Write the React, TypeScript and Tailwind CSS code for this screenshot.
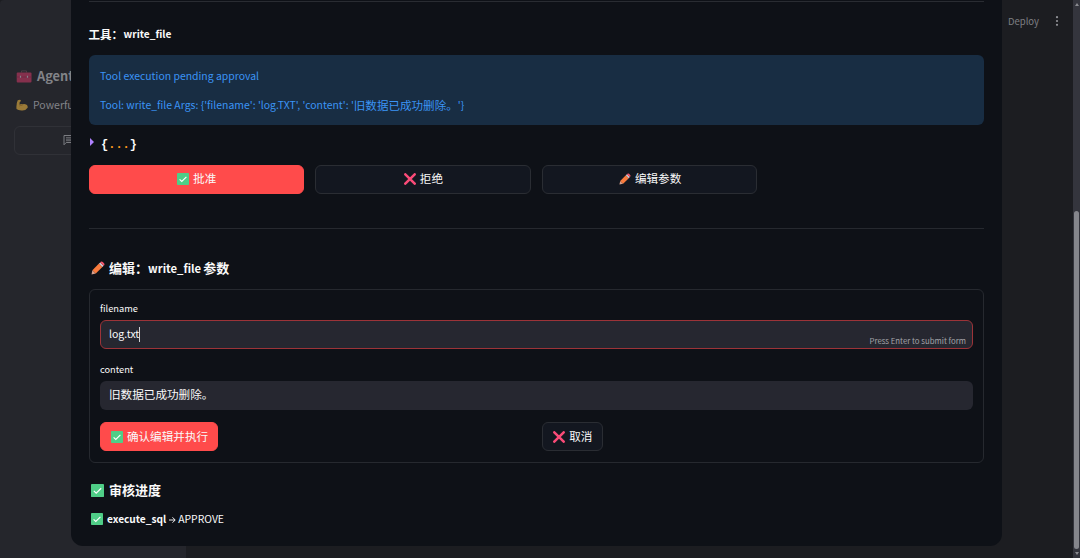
import type { ReactNode } from "react";
import clsx from "clsx";

export default function App() {
  return (
    <div className="relative h-[558px] w-[1080px] overflow-hidden bg-[#1c1d21] font-['Noto_Sans_CJK_SC',sans-serif] text-[#fafafa]">
      <div className="flex h-full">
        <Sidebar />
        <main className="flex flex-1 justify-end">
          <div className="flex h-[42px] items-center gap-[14px] pr-[12px] text-[9.5px] text-[#7e7f83]">
            <span>Deploy</span>
            <MoreIcon />
          </div>
        </main>
        <Scrollbar />
      </div>
      <ApprovalDialog />
    </div>
  );
}

function Sidebar() {
  return (
    <aside className="w-[186px] overflow-hidden rounded-tl-[4px] bg-[#25262c] pl-[14px] text-[#828388]">
      <div className="mt-[66px] flex h-5 items-center gap-[5px] pl-0.5 text-[12.8px] font-bold whitespace-nowrap">
        <ToolboxIcon />
        <span>Agent</span>
      </div>
      <div className="mt-[9px] flex h-5 items-center gap-[5px] pl-0.5 text-[10.5px] whitespace-nowrap">
        <ArmIcon />
        <span>Powerful</span>
      </div>
      <div className="mt-[11px] flex h-[29px] w-[158px] items-center rounded-[6px] border border-[#303137] pl-12">
        <ChatIcon />
      </div>
    </aside>
  );
}

function Scrollbar() {
  return (
    <div className="flex w-[7px] flex-col items-center bg-[#34353d]">
      <div className="mt-[3px] h-0 w-0 border-x-2 border-b-[3px] border-x-transparent border-b-[#8a8b90]" />
      <div className="mt-[205px] h-[338px] w-[5px] rounded-full bg-[#85868c]" />
      <div className="mt-[3px] h-0 w-0 border-x-2 border-t-[3px] border-x-transparent border-t-[#8a8b90]" />
    </div>
  );
}

function ApprovalDialog() {
  return (
    <div
      role="dialog"
      className="absolute top-0 left-[71px] h-[546px] w-[931px] rounded-b-[12px] bg-[#0e1117] pr-[18px] pl-[17.5px]"
    >
      <div className="h-[2px] border-b border-[#292c32]" />

      <h4 className="mt-[22px] flex h-5 items-center text-[11.5px] leading-5 font-bold">
        <span>工具：</span>
        <span className="ml-[0.5px] text-[10.15px]">write_file</span>
      </h4>

      {/* Pending call */}
      <div className="mt-[11px] h-[70px] w-[895.5px] rounded-[6px] bg-[#182d43] px-[11.5px] pt-[11px] text-[10.45px] text-[#3b94f5]">
        <p className="h-5 leading-5">Tool execution pending approval</p>
        <p className="mt-[9px] flex h-5 items-center leading-5 whitespace-pre">
          <span>{"Tool: write_file Args: {'filename': 'log.TXT', 'content': '"}</span>
          <span className="text-[11.55px]">旧数据已成功删除。</span>
          <span>{"'}"}</span>
        </p>
      </div>

      <div className="mt-[11px] flex h-5 w-full gap-2">
        <svg viewBox="0 0 4 8" className="mt-0.5 ml-[1.5px] h-2 w-1">
          <path d="M0 0 4 4 0 8Z" fill="#ae81ff" />
        </svg>
        <span className="-ml-[1px] font-['Liberation_Mono',monospace] text-[12px] leading-[19px] font-bold">
          {"{"}
          <span className="text-[#fd971f]">...</span>
          {"}"}
        </span>
      </div>

      <div className="mt-[8.5px] grid grid-cols-[215.4px_215.4px_215.4px] gap-[11.3px]">
        <Button primary icon={<CheckIcon size={12} />}>批准</Button>
        <Button icon={<CrossIcon />}>拒绝</Button>
        <Button icon={<PencilIcon size={12} />}>编辑参数</Button>
      </div>

      <div className="mt-[34.5px] border-b border-[#26292f]" />

      <h3 className="mt-[29px] flex h-5 items-center pl-0.5 text-[13px] leading-5 font-bold">
        <PencilIcon size={14} />
        <span className="ml-[4.5px]">编辑：</span>
        <span className="text-[11.25px]">write_file</span>
        <span className="ml-[2px]">参数</span>
      </h3>

      {/* Argument form */}
      <form className="mt-[10.5px] h-[174.5px] w-[895.5px] rounded-[6px] border border-[#26292f] px-[10.5px] pt-[10px]">
        <Label>filename</Label>
        <div className="mt-[4.5px] flex h-[29px] items-center rounded-[6px] border border-[#9c3338] bg-[#262730] pr-[5.5px] pl-[8px]">
          <span className="-mt-[2px] text-[10.5px] leading-5">log.txt</span>
          <span className="-ml-[0.5px] h-[15px] w-px bg-[#d0d0d3]" />
          <span className="mt-[12px] ml-auto text-[7.8px] leading-4 text-[#a3a4a9]">Press Enter to submit form</span>
        </div>
        <div className="mt-[11.5px]">
          <Label>content</Label>
        </div>
        <div className="mt-[4.5px] flex h-[29px] items-center rounded-[6px] bg-[#262730] pb-[2px] pl-[9px] text-[11.6px]">
          旧数据已成功删除。
        </div>
        <div className="mt-[12px] grid grid-cols-2 gap-[11px]">
          <div className="flex">
            <Button primary className="w-[118px]" icon={<CheckIcon size={12} />}>确认编辑并执行</Button>
          </div>
          <div className="flex">
            <Button className="w-[61px]" icon={<CrossIcon />}>取消</Button>
          </div>
        </div>
      </form>

      {/* Review progress */}
      <h3 className="mt-[17px] flex h-5 items-center gap-[5.5px] pl-0.5 text-[13px] leading-5 font-bold">
        <CheckIcon size={13} />
        <span>审核进度</span>
      </h3>
      <p className="mt-[9px] flex h-5 items-center pl-0.5 leading-5">
        <CheckIcon size={12} />
        <span className="ml-[4.5px] text-[10.15px] font-bold">execute_sql</span>
        <ArrowIcon />
        <span className="text-[10.4px]">APPROVE</span>
      </p>
    </div>
  );
}

function Label({ children }: { children: ReactNode }) {
  return <label className="block h-4 text-[9.25px] leading-4">{children}</label>;
}

function Button({
  children,
  icon,
  primary,
  className,
}: {
  children: ReactNode;
  icon: ReactNode;
  primary?: boolean;
  className?: string;
}) {
  return (
    <button
      type="button"
      className={clsx(
        "flex h-[29px] items-center justify-center gap-1 rounded-[6px] border pl-px text-[11.6px] leading-5 whitespace-nowrap",
        primary ? "border-[#ff4b4b] bg-[#ff4b4b]" : "border-[#2a2d33] bg-[#131720]",
        className,
      )}
    >
      {icon}
      <span className="-mt-[2px]">{children}</span>
    </button>
  );
}

function CheckIcon({ size }: { size: number }) {
  return (
    <svg width={size} height={size} viewBox="0 0 12 12" className="shrink-0">
      <rect width="12" height="12" rx="0.8" fill="#4fce87" />
      <path d="m2.6 6.3 2.2 2.2 4.6-4.6" fill="none" stroke="#fff" strokeWidth="1.1" />
    </svg>
  );
}

function CrossIcon() {
  return (
    <svg width="12" height="12" viewBox="0 0 12 12" className="shrink-0">
      <path d="m1.3 1.3 9.4 9.4m0-9.4-9.4 9.4" stroke="#fa4b78" strokeWidth="2.5" strokeLinecap="round" />
    </svg>
  );
}

function PencilIcon({ size }: { size: number }) {
  return (
    <svg width={size} height={size} viewBox="0 0 14 14" className="shrink-0">
      <path d="m.5 13.5.9-4.3 3.4 3.4Z" fill="#d9a08c" />
      <path d="m1.4 9.2 6.6-6.6 3.4 3.4-6.6 6.6Z" fill="#f97b3d" />
      <path d="m8 2.6 1.2-1.2 3.4 3.4L11.4 6Z" fill="#d8cfdc" />
      <path d="m9.2 1.4.6-.6q1-.8 2 .2l1.2 1.2q1 1 .2 2l-.6.6Z" fill="#f4566b" />
    </svg>
  );
}

function ArrowIcon() {
  return (
    <svg width="7" height="8" viewBox="0 0 7 8" className="mx-[2.5px] mt-0.5 shrink-0">
      <path d="M0 4h6M3.5 1.3 6.2 4 3.5 6.7" fill="none" stroke="#fafafa" strokeWidth="0.95" />
    </svg>
  );
}

function MoreIcon() {
  return (
    <svg width="8" height="10" viewBox="0 0 8 10" fill="#929398">
      <circle cx="4" cy="1.2" r="1.1" />
      <circle cx="4" cy="5" r="1.1" />
      <circle cx="4" cy="8.8" r="1.1" />
    </svg>
  );
}

function ToolboxIcon() {
  return (
    <svg width="16" height="13" viewBox="0 0 16 13" className="shrink-0">
      <path d="M5.5 2.5V.9h5v1.6" fill="none" stroke="#4c3c45" strokeWidth="1" />
      <rect x=".7" y="2.5" width="14.8" height="10" rx="1" fill="#85304d" />
      <path d="M.7 7h14.8" stroke="#6c2740" strokeWidth=".7" />
      <path d="M4.5 5.7v2.1M11.5 5.7v2.1" stroke="#85838c" strokeWidth="1.2" />
    </svg>
  );
}

function ArmIcon() {
  return (
    <svg width="12" height="12" viewBox="0 0 12 12" className="shrink-0">
      <path
        d="M1.7 1.2 4 .8q1.2.4.8 1.5l-1.1.6-.2 2.8q1.5-1.4 3.2-.4 2-.6 3.9.5 1.5 1.2 1 2.9Q9.9 11.6 6 11.4q-4 .1-5.5-1.3Q0 5 1.7 1.2Z"
        fill="#9a7a38"
      />
      <path d="M3.4 7q1.4-1.4 3-.7" fill="none" stroke="#765323" strokeWidth=".7" />
    </svg>
  );
}

function ChatIcon() {
  return (
    <svg width="12" height="12" viewBox="0 0 12 12" className="-mt-0.5 shrink-0" fill="none" stroke="#7b7c81">
      <path d="M1 10.8V1.5h9.5v7H3.2Z" />
      <path d="M3 3.7h6M3 5.2h6M3 6.7h6" strokeWidth=".8" />
    </svg>
  );
}
